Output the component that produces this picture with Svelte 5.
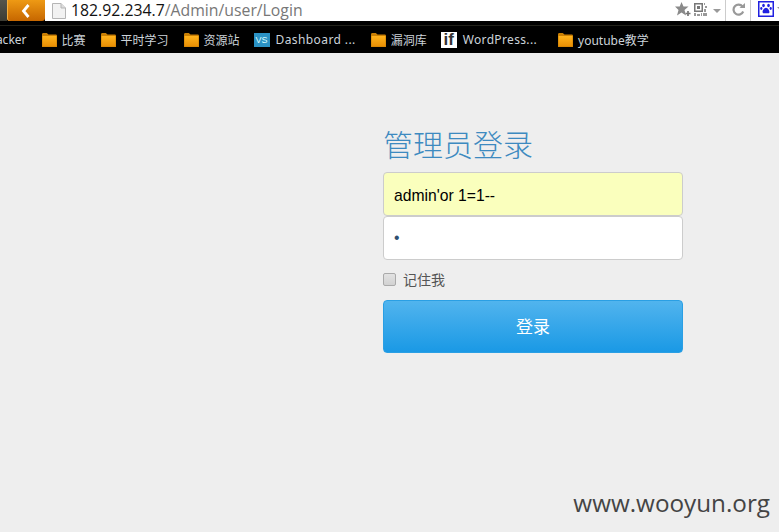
<script>
  const bookmarks = [
    { label: '比赛' },
    { label: '平时学习' },
    { label: '资源站' },
    { label: 'Dashboard ...', icon: 'vs', cls: 'dash' },
    { label: '漏洞库' },
    { label: 'WordPress...', icon: 'if', cls: 'wp' },
    { label: 'youtube教学' }
  ];
</script>

<div class="page">
  <header class="toolbar">
    <div class="edge"></div>
    <button class="back" aria-label="back">
      <svg width="12" height="14" viewBox="0 0 12 14"><path d="M8.500 1 3.500 7l5 6" fill="none" stroke="#fff" stroke-width="2.800"/></svg>
    </button>
    <div class="address">
      <svg class="doc" width="14" height="16" viewBox="0 0 14 16"><path d="M.5.500h8.500l4.500 4.500v10.500H.5z" fill="#f2f2f2" stroke="#b5b5b5"/><path d="M9 .5v4.500h4.500" fill="#ddd" stroke="#b5b5b5"/></svg>
      <span class="host">182.92.234.7</span><span class="path">/Admin/user/Login</span>
    </div>
    <div class="tools">
      <svg class="star" width="16" height="14" viewBox="0 0 16 14"><path d="M6.500 0l2 4.600h5l-4 3.400L11 13.500 6.500 10.500 2 13.500 3.500 8l-3.500-3.400h4.700z" fill="#8a8a8a"/><path d="M10.500 11.500h5M13 9v5" stroke="#777" stroke-width="1.700"/></svg>
      <svg class="qr" width="13" height="13" viewBox="0 0 13 13"><path d="M0 0h9v9H0z" fill="#777"/><path d="M1.500 1.500h6v6h-6z" fill="#fff"/><path d="M3 3h3v3H3z" fill="#777"/><path d="M10 0h1v2h-1zM11 3h2v2h-2zM10 6h2v3h-2zM0 10h2v3H0zM3 11h3v2H3zM7 10h1v3H7zM9 10h4v3H9z" fill="#999"/></svg>
      <svg class="caret" width="8" height="4" viewBox="0 0 8 4"><path d="M0 0h8L4 4z" fill="#999"/></svg>
      <i class="sep sep-a"></i>
      <svg class="reload" width="13" height="13" viewBox="0 0 13 13"><path d="M10.500 3.500A5 5 0 1 0 11.200 8.500" fill="none" stroke="#999" stroke-width="2.200"/><path d="M7.500 5H13V0z" fill="#999"/></svg>
      <i class="sep sep-b"></i>
      <svg class="paw" width="16" height="16" viewBox="0 0 16 16"><rect x=".75" y=".75" width="14.500" height="14.500" fill="#fff" stroke="#2020e0" stroke-width="1.500"/><ellipse cx="5.500" cy="4.500" rx="1.300" ry="1.700" fill="#2020e0"/><ellipse cx="10.500" cy="4.500" rx="1.300" ry="1.700" fill="#2020e0"/><ellipse cx="3.300" cy="7.500" rx="1.100" ry="1.400" fill="#2020e0"/><ellipse cx="12.700" cy="7.500" rx="1.100" ry="1.400" fill="#2020e0"/><path d="M8 6.800c1.800 0 3.800 2.900 3.400 4.700-.4 1.200-2.200.7-3.400.7s-3 .5-3.400-.7C4.200 9.700 6.200 6.800 8 6.800z" fill="#2020e0"/></svg>
      <svg class="caret-end" width="2" height="4" viewBox="0 0 2 4"><path d="M0 0h2v2z" fill="#999"/></svg>
    </div>
  </header>
  <div class="strip"></div>
  <nav class="bookmarks">
    <span class="cut">Hacker</span>
    {#each bookmarks as b}
      <span class="mark {b.cls ?? ''}">
        {#if b.icon === 'vs'}
          <span class="ic-vs">VS</span>
        {:else if b.icon === 'if'}
          <span class="ic-if">if</span>
        {:else}
          <svg width="15" height="14" viewBox="0 0 15 14"><defs><linearGradient id="f" x1="0" y1="0" x2="0" y2="1"><stop offset="0" stop-color="#ffb31c"/><stop offset="1" stop-color="#e88e04"/></linearGradient></defs><path d="M0 1.500C0 .7.500 0 1.300 0h3.500l1.700 1.500h7.200c.8 0 1.300.6 1.300 1.400V14H0z" fill="#c97f04"/><path d="M.5 3h14v10.500H.5z" fill="url(#f)"/></svg>
        {/if}
        <span>{b.label}</span>
      </span>
    {/each}
  </nav>

  <main class="main">
    <form class="login" onsubmit={(e) => e.preventDefault()}>
      <h2>管理员登录</h2>
      <input class="user" type="text" value="admin'or 1=1--" aria-label="用户名" />
      <input class="pass" type="password" value="a" aria-label="密码" />
      <label class="remember"><input type="checkbox" /><span>记住我</span></label>
      <button class="submit" type="submit">登录</button>
    </form>
  </main>
  <div class="mark-wm">www.wooyun.org</div>
</div>

<style>
  :global(body) { margin: 0; background: #eee; }
  .page {
    position: relative;
    width: 779px;
    height: 532px;
    overflow: hidden;
    background: #eee;
    display: flex;
    flex-direction: column;
    font-family: "Liberation Sans", "Noto Sans CJK SC", sans-serif;
  }
  .toolbar { height: 21px; display: flex; background: #000; flex: none; }
  .edge { width: 7px; background: linear-gradient(#55554c, #3c3c34); flex: none; }
  .back {
    width: 38px; height: 21px; padding: 0; border: 0; border-radius: 0 0 3px 3px; flex: none;
    background: linear-gradient(#ee9a14, #c66600);
    box-shadow: inset 1px 0 0 #f4b040;
    display: flex; align-items: center; justify-content: center;
  }
  .address {
    flex: 1; min-width: 0; background: #fff; display: flex; align-items: center;
    padding-left: 7px; font-family: "Open Sans", sans-serif; font-size: 15.800px; line-height: 21px;
  }
  .doc { margin-right: 5px; flex: none; }
  .host { color: #111; }
  .path { color: #777; }
  .tools { background: #fff; display: flex; align-items: center; height: 21px; flex: none; }
  .tools svg { flex: none; }
  .qr { margin-left: 3px; }
  .caret { margin-left: 6px; }
  .sep { width: 1px; align-self: stretch; background: #ccc; }
  .sep-a { margin: 0 6px 0 4px; }
  .sep-b { margin: 0 7px 0 5px; }
  .paw { margin-bottom: 4px; }
  .star, .qr, .reload { margin-bottom: 3px; }
  .caret-end { margin-left: 3px; margin-bottom: 3px; }
  .strip { height: 6px; flex: none; background: linear-gradient(#000 4px, #22221a 4px); }
  .bookmarks {
    height: 27px; flex: none; background: #000; color: #ccd3da; display: flex; align-items: center;
    font-family: "Noto Sans", "Noto Sans CJK SC", sans-serif; font-size: 12px; white-space: nowrap;
    gap: 15px; margin-left: -13px; margin-top: -1px; overflow: hidden;
  }
  .cut { flex: none; }
  .mark { display: flex; align-items: center; gap: 5px; flex: none; }
  .dash { letter-spacing: .4px; gap: 6px; margin-left: -1px; }
  .wp { letter-spacing: .35px; gap: 6px; margin-left: -1px; padding-right: 6px; }
  .ic-vs {
    width: 16px; height: 14px; background: #2b92c4; color: #dff; font-size: 9px; line-height: 14px; letter-spacing: 0;
    text-align: center; font-family: "Liberation Sans", sans-serif;
  }
  .ic-if {
    width: 16px; height: 16px; background: #fff; color: #333; font: bold 17px/15px "Liberation Sans", sans-serif;
    text-align: center; letter-spacing: 0;
  }
  .main { flex: 1; display: flex; padding-left: 383px; padding-top: 71px; }
  .login { width: 300px; display: flex; flex-direction: column; }
  h2 {
    margin: -1px 0 9px; height: 40px; font-size: 30px; line-height: 40px; font-weight: 300; color: #3d8ac0;
    font-family: "Noto Sans CJK SC", sans-serif;
  }
  input.user, input.pass {
    box-sizing: border-box; width: 300px; height: 44px; margin: 0; padding: 0 10px;
    border: 1px solid #ccc; border-radius: 4px; font-size: 15.700px; outline: 0;
    font-family: "Liberation Sans", sans-serif;
  }
  input.user { background: #faffbd; color: #000; padding-top: 3px; }
  .pass { background: #fff; color: #2f4f70; }
  .remember {
    display: flex; align-items: center; gap: 7px; height: 20px; margin: 9px 0 11px;
    font-size: 14px; color: #555;
  }
  .remember input {
    appearance: none; box-sizing: border-box; width: 13px; height: 13px; margin: 0;
    border: 1px solid #aaa; border-radius: 2px; background: linear-gradient(#e2e2e2, #d2d2d2);
  }
  .submit {
    height: 53px; width: 300px; border: 1px solid #2a9fe4; border-radius: 4px; padding: 0 0 2px;
    background: linear-gradient(#51b4ee, #1a99e5);
    color: #fff; font-size: 17px; font-family: "Noto Sans CJK SC", sans-serif;
  }
  .mark-wm {
    position: absolute; right: 9px; bottom: 13px;
    font-family: "Open Sans", sans-serif; font-size: 24.250px; line-height: 32px; color: #444;
  }
</style>
